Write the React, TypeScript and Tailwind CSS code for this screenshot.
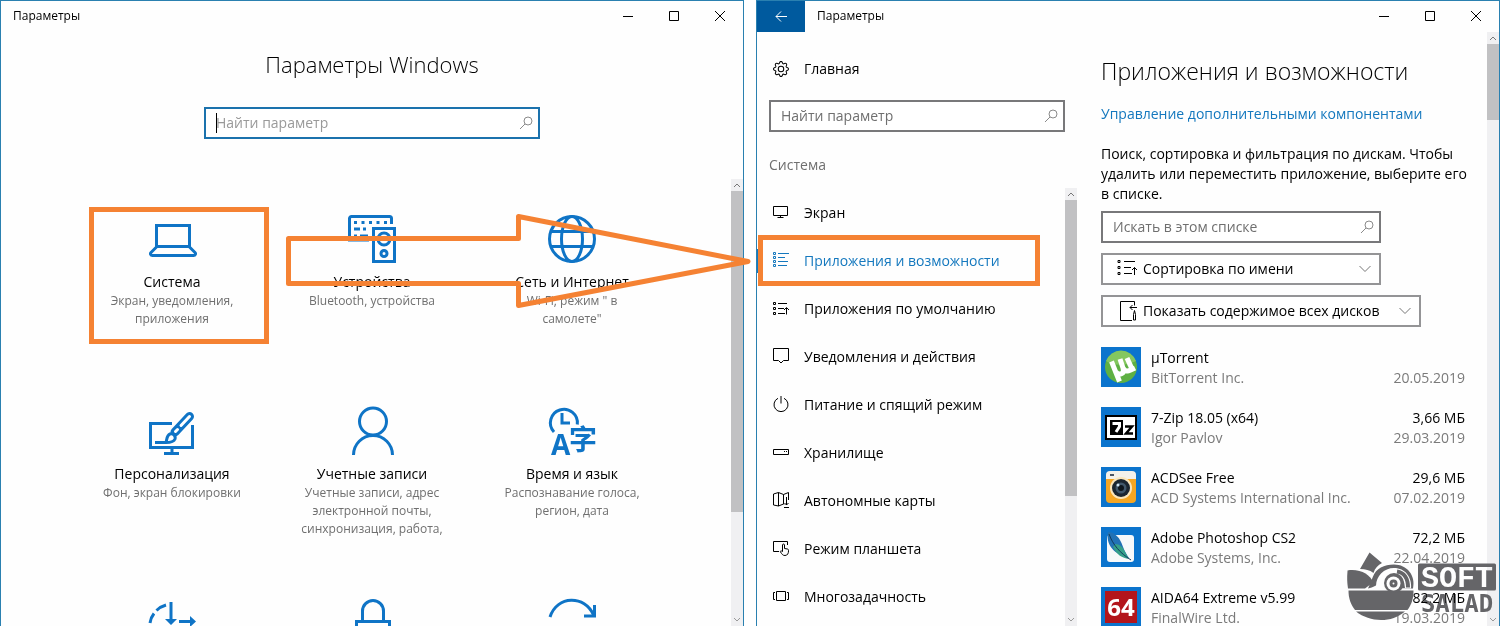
import type { ReactNode } from 'react'
import { BsGear } from 'react-icons/bs'

type IconProps = { children: ReactNode }

function TileIcon({ children }: IconProps) {
  return (
    <svg
      className="h-12 w-12 shrink-0 overflow-visible text-[#0f74c6]"
      viewBox="0 0 48 48"
      fill="none"
      stroke="currentColor"
      strokeWidth={3}
    >
      {children}
    </svg>
  )
}

function SmallIcon({ children }: IconProps) {
  return (
    <svg
      className="h-4 w-4 shrink-0 overflow-visible"
      viewBox="0 0 16 16"
      fill="none"
      stroke="currentColor"
    >
      {children}
    </svg>
  )
}

const LaptopIcon = () => (
  <TileIcon>
    <path d="M8.5 31.5v-21h33v21z" />
    <path d="m9 31.5-6 6c-1 1-.5 3 1.500 3h41c2 0 2.500-2 1.500-3l-6-6" />
  </TileIcon>
)

const DevicesIcon = () => (
  <TileIcon>
    <path d="M43.5 9V3.500a2 2 0 0 0-2-2h-38a2 2 0 0 0-2 2V25H21" />
    <path d="M6 7.500h3M13.500 7.500h3M21 7.500h3M28.500 7.500h3M36 7.500h3M6 14h6M15 14h3M6 21h3M12 21h8" />
    <path d="M25.500 13.500h21v33h-21z" />
    <circle cx="36" cy="24" r="6" />
    <circle cx="36" cy="38.500" r="3" />
  </TileIcon>
)

const GlobeIcon = () => (
  <TileIcon>
    <circle cx="24" cy="24" r="22.500" />
    <ellipse cx="24" cy="24" rx="10.500" ry="22.500" />
    <path d="M3.500 16.500h41M3.500 31.500h41" />
  </TileIcon>
)

const PersonalizationIcon = () => (
  <TileIcon>
    <path d="M24 16.500H2.500v24h42V18M24 41v5M16 46.500h15" />
    <path d="M42 9 29 23" stroke="white" strokeWidth={13} />
    <path d="M41.500 9.500 27 25" strokeWidth={9} strokeLinecap="round" />
    <path d="M41.500 9.500 33 18.500M29.500 22.500l-2 2" stroke="white" strokeWidth={3} strokeLinecap="round" />
    <path
      d="M7 35.500h11c1-3 .5-7 4-8.500 3-1 6 2 5 5-1.500 3.500-6 3.500-9 3.500z"
      fill="white"
      strokeWidth={3}
    />
  </TileIcon>
)

const AccountIcon = () => (
  <TileIcon>
    <circle cx="25" cy="14.500" r="13.500" />
    <path d="M5.500 48a19.500 19.500 0 0 1 39 0" />
  </TileIcon>
)

const TimeIcon = () => (
  <TileIcon>
    <path d="M6 25A13.500 13.500 0 1 1 29.300 17.500" />
    <path d="M14 6v10h8" />
    <g fill="currentColor" stroke="none">
      <text x="3" y="48" className="font-['Open_Sans'] text-[28px] font-bold">
        A
      </text>
      <text x="21" y="43" className="font-['Noto_Sans_CJK_SC'] text-[28px] font-bold">
        字
      </text>
    </g>
  </TileIcon>
)

const AccessIcon = () => (
  <TileIcon>
    <path d="M2 24c.5-4 2-7 4-9.500M8.500 11.500c3-3 6-4.500 9.500-5.500M23 3v18M31 22.500h13" />
    <path d="M17 20h12l-6 6zM42 17l6 5.500-6 5.500z" fill="currentColor" stroke="none" />
  </TileIcon>
)

const LockIcon = () => (
  <TileIcon>
    <path d="M14.500 22V12a10.500 10.500 0 0 1 21 0v10M8.500 48V22.500h33V48" />
  </TileIcon>
)

const UpdateIcon = () => (
  <TileIcon>
    <path d="M2 18C9-4 37-4 45.500 16" />
    <path d="M46.500 6v11H36" />
  </TileIcon>
)

const tiles = [
  { icon: <LaptopIcon />, title: 'Система', lines: ['Экран, уведомления,', 'приложения'] },
  { icon: <DevicesIcon />, title: 'Устройства', lines: ['Bluetooth, устройства'] },
  { icon: <GlobeIcon />, title: 'Сеть и Интернет', lines: ['Wi-Fi, режим " в', 'самолете"'] },
  { icon: <PersonalizationIcon />, title: 'Персонализация', lines: ['Фон, экран блокировки'] },
  {
    icon: <AccountIcon />,
    title: 'Учетные записи',
    lines: ['Учетные записи, адрес', 'электронной почты,', 'синхронизация, работа,'],
  },
  { icon: <TimeIcon />, title: 'Время и язык', lines: ['Распознавание голоса,', 'регион, дата'] },
  { icon: <AccessIcon />, title: '', lines: [] },
  { icon: <LockIcon />, title: '', lines: [] },
  { icon: <UpdateIcon />, title: '', lines: [] },
]

const SortIcon = () => (
  <SmallIcon>
    <path d="M.5 1.500h2v2h-2zM.5 6.500h2v2h-2zM.5 11.500h2v2h-2zM5 2.500h9M5 7.500h6M5 12.500h7M13.500 13.500V7M11 9l2.500-2.500L16 9" />
  </SmallIcon>
)

const nav = [
  {
    label: 'Экран',
    icon: (
      <SmallIcon>
        <path d="M.5 1.500h14v9H.5zM7.500 10.500v2M4.500 12.500h6" />
      </SmallIcon>
    ),
  },
  {
    label: 'Приложения и возможности',
    active: true,
    icon: (
      <SmallIcon>
        <path d="M.5-.5h2v2h-2zM.5 3.500h2v2h-2zM.5 7.500h2v2h-2zM.5 11.500h2v2h-2zM5 .5h11M5 4.500h7M5 8.500h10M5 12.500h9" />
      </SmallIcon>
    ),
  },
  { label: 'Приложения по умолчанию', icon: <SortIcon /> },
  {
    label: 'Уведомления и действия',
    icon: (
      <SmallIcon>
        <path d="M.5-.5h15v12h-5L8 14l-2.500-2.500h-5z" />
      </SmallIcon>
    ),
  },
  {
    label: 'Питание и спящий режим',
    icon: (
      <SmallIcon>
        <path d="M5 1.300a7 7 0 1 0 6 0M8-1v7.500" />
      </SmallIcon>
    ),
  },
  {
    label: 'Хранилище',
    icon: (
      <SmallIcon>
        <path d="M.5 4.500h15v5H.5zM11 6.500h1M13 6.500h1" />
      </SmallIcon>
    ),
  },
  {
    label: 'Автономные карты',
    icon: (
      <SmallIcon>
        <path d="M11 11.500 10.500 11l-5 2-5-1V1l5-1.500 5 2 5-2V7M5.500-.5V13M10.500 1.500V11M13.500 4v8M11.500 10l2 2 2-2M11 14.500h5" />
      </SmallIcon>
    ),
  },
  {
    label: 'Режим планшета',
    icon: (
      <SmallIcon>
        <path d="M6 10.500H.5v-10h14V4" />
        <path d="M9.500 10V4c0-1.300 2-1.300 2 0v3.500l3 .5c1 .2 1 1 1 2 0 2-.8 4.500-3.500 4.500-2.500 0-3-1.500-4.500-3.500-.5-1 .5-1.500 2-.5z" />
      </SmallIcon>
    ),
  },
  {
    label: 'Многозадачность',
    icon: (
      <SmallIcon>
        <path d="M3.500 2.500h9v9h-9zM2 3.500H.5v7H2M14 3.500h1.500v7H14" />
      </SmallIcon>
    ),
  },
]

const apps = [
  {
    name: 'µTorrent',
    vendor: 'BitTorrent Inc.',
    size: '',
    date: '20.05.2019',
    art: (
      <>
        <circle cx="20" cy="20" r="16" fill="#5fb043" />
        <path d="M5 14a16 16 0 0 1 30 0c-8 4-20 6-30 0z" fill="#84c75f" />
        <path
          d="m10.500 14.500 8 20M15 25c3 4 9 2 7-4l-3-9M22 21c2 5 6 3 12 0"
          fill="none"
          stroke="white"
          strokeWidth={5}
        />
        <path d="m26 11 5 11" stroke="white" strokeWidth={5} />
      </>
    ),
  },
  {
    name: '7-Zip 18.05 (x64)',
    vendor: 'Igor Pavlov',
    size: '3,66 МБ',
    date: '29.03.2019',
    art: (
      <>
        <path d="M4 8h32v25H4z" />
        <path d="M6 10h28v21H6z" fill="white" />
        <path d="M9 13h13v15H9z" />
        <path d="M11.500 16.500h7v3L15 25" fill="none" stroke="white" strokeWidth={3} />
        <path d="M24 19.500h7L25 26.500h7" fill="none" stroke="black" strokeWidth={2.5} />
      </>
    ),
  },
  {
    name: 'ACDSee Free',
    vendor: 'ACD Systems International Inc.',
    size: '29,6 МБ',
    date: '07.02.2019',
    art: (
      <>
        <rect x="5" y="5" width="30" height="31" rx="4" fill="#f5a623" />
        <path d="M5 12V8a4 4 0 0 1 4-4h22a4 4 0 0 1 4 4v4z" fill="#f4f1ea" />
        <path d="M9 7h4v2H9z" fill="#4b5563" />
        <circle cx="20" cy="21" r="11" fill="#fbe6bb" />
        <circle cx="20" cy="21" r="9" fill="#1b2530" />
        <circle cx="20" cy="21" r="5.500" fill="#41576b" />
        <circle cx="20" cy="21" r="3" fill="#0e151c" />
        <circle cx="17" cy="18" r="1.500" fill="#cfe3f2" />
      </>
    ),
  },
  {
    name: 'Adobe Photoshop CS2',
    vendor: 'Adobe Systems, Inc.',
    size: '72,2 МБ',
    date: '22.04.2019',
    art: (
      <>
        <rect x="6" y="8" width="27" height="27" rx="3" fill="#f7f9fa" />
        <path d="M7 5c6 0 11 5 13 10 2 4 3 9 8 16C18 29 4 21 7 5z" fill="#2272b5" />
        <path d="M14 17c4 0 8 3 9 6l5 9c-7-1-12-4-16-12z" fill="#35a08a" />
        <path d="M8 7c4 11 11 19 22 26" fill="none" stroke="#123a5c" />
      </>
    ),
  },
  {
    name: 'AIDA64 Extreme v5.99',
    vendor: 'FinalWire Ltd.',
    size: '82,2 МБ',
    date: '19.03.2019',
    art: (
      <>
        <path d="M4 4h32v32H4z" fill="#b3151b" />
        <text
          x="20"
          y="29"
          textAnchor="middle"
          fill="white"
          className="font-['Open_Sans'] text-[24px] font-bold"
        >
          64
        </text>
      </>
    ),
  },
]

function SearchGlyph() {
  return (
    <svg
      className="pointer-events-none absolute right-1.5 top-2 h-4 w-4 text-[#8a8a8a]"
      viewBox="0 0 16 16"
      fill="none"
      stroke="currentColor"
    >
      <circle cx="10" cy="6" r="4" />
      <path d="M7 9 2 14" />
    </svg>
  )
}

function CaptionButtons() {
  return (
    <div className="ml-auto flex h-[29px]">
      {['M0 5.500h10', 'M.5.5h9v9h-9z', 'm0 0 10 10M10 0 0 10'].map((d) => (
        <button key={d} className="flex w-[46px] items-center justify-center">
          <svg className="h-2.5 w-2.5 overflow-visible" viewBox="0 0 10 10" fill="none" stroke="black">
            <path d={d} />
          </svg>
        </button>
      ))}
    </div>
  )
}

function Scrollbar({ thumb }: { thumb: number }) {
  return (
    <div className="flex w-3 shrink-0 flex-col bg-[#f0f0f2]">
      <button className="flex h-3 items-center justify-center">
        <svg className="h-1.5 w-2" viewBox="0 0 8 6" fill="none" stroke="#777">
          <path d="m1 5 3-3 3 3" />
        </svg>
      </button>
      <div className="min-h-0 flex-1">
        <div className="bg-[#c1c1c3]" style={{ height: `${thumb}%` }} />
      </div>
      <button className="flex h-3 items-center justify-center">
        <svg className="h-1.5 w-2" viewBox="0 0 8 6" fill="none" stroke="#999">
          <path d="m1 1 3 3 3-3" />
        </svg>
      </button>
    </div>
  )
}

function SettingsHome() {
  return (
    <section className="flex min-w-0 flex-1 flex-col border border-b-0 border-[#2a80b0] bg-[#fefefe]">
      <header className="flex h-[31px] shrink-0">
        <span className="pl-3 text-xs/[29px]">Параметры</span>
        <CaptionButtons />
      </header>
      <h1 className="mt-4 text-center text-[22px]/8 font-light">Параметры Windows</h1>
      <div className="relative mx-auto mt-[27px] w-[336px] shrink-0">
        <input
          aria-label="Найти параметр"
          placeholder="Найти параметр"
          className="h-8 w-full border-2 border-[#1b72ad] bg-white px-2.5 pb-0.5 text-sm outline-none placeholder:text-[#999]"
        />
        <span className="absolute left-3 top-1.5 h-5 w-px bg-black" />
        <SearchGlyph />
      </div>
      <div className="mt-10 flex min-h-0 flex-1 pl-3">
        <div className="min-w-0 flex-1 overflow-hidden pt-9">
          <div className="mx-auto grid max-w-[600px] grid-cols-3">
            {tiles.map((tile, i) => (
              <button key={i} className="flex h-48 flex-col items-center">
                {tile.icon}
                <span className="mt-[9px] whitespace-nowrap text-sm/5">{tile.title}</span>
                <span className="whitespace-nowrap text-xs/[18px] text-[#6f6f6f]">
                  {tile.lines.map((line) => (
                    <span key={line} className="block">
                      {line}
                    </span>
                  ))}
                </span>
              </button>
            ))}
          </div>
        </div>
        <Scrollbar thumb={76} />
      </div>
    </section>
  )
}

function Sidebar() {
  return (
    <nav className="flex w-80 shrink-0 flex-col">
      <a href="#home" className="mt-3 flex h-12 shrink-0 items-center gap-[15px] pl-4 pt-0.5 text-sm">
        <BsGear className="h-4 w-4" />
        Главная
      </a>
      <div className="relative mx-3 mt-2 shrink-0">
        <input
          aria-label="Найти параметр"
          placeholder="Найти параметр"
          className="h-8 w-full border-2 border-[#78787a] bg-white px-2.5 pb-0.5 text-sm outline-none placeholder:text-[#6f6f6f]"
        />
        <SearchGlyph />
      </div>
      <h2 className="shrink-0 pb-[13px] pl-3 pt-[23px] text-sm/5 text-[#6f6f6f]">Система</h2>
      <div className="flex min-h-0 flex-1">
        <ul className="min-w-0 flex-1 overflow-hidden">
          {nav.map((item) => (
            <li key={item.label}>
              <a
                href="#section"
                className={
                  item.active
                    ? 'relative flex h-12 items-center gap-[15px] pl-4 pt-0.5 text-sm text-[#1478be] before:absolute before:left-0 before:h-6 before:w-1 before:bg-[#1478be]'
                    : 'flex h-12 items-center gap-[15px] pl-4 pt-0.5 text-sm'
                }
              >
                {item.icon}
                {item.label}
              </a>
            </li>
          ))}
        </ul>
        <Scrollbar thumb={71.5} />
      </div>
    </nav>
  )
}

function Picker({ label, icon, wide }: { label: string; icon: ReactNode; wide?: boolean }) {
  return (
    <div className={wide ? 'relative mt-2.5 w-80' : 'relative mt-2.5 w-[280px]'}>
      <select
        aria-label={label}
        className="block h-8 w-full appearance-none border-2 border-[#949496] bg-white pl-10 text-sm"
      >
        <option>{label}</option>
      </select>
      <span className="pointer-events-none absolute left-4 top-1.5">{icon}</span>
      <svg
        className="pointer-events-none absolute right-2.5 top-3 h-2 w-3"
        viewBox="0 0 12 8"
        fill="none"
        stroke="#777"
      >
        <path d="m.5 1 5.500 5.500L11.500 1" />
      </svg>
    </div>
  )
}

function AppsPage() {
  return (
    <div className="flex min-w-0 flex-1">
      <div className="min-w-0 flex-1 overflow-hidden pl-6 pr-[22px] pt-6 text-sm/5">
        <h1 className="text-[23px]/[30px] font-light">Приложения и возможности</h1>
        <a href="#features" className="mt-[18px] block whitespace-nowrap text-[#1478be]">
          Управление дополнительными компонентами
        </a>
        <p className="mt-5 whitespace-nowrap">
          Поиск, сортировка и фильтрация по дискам. Чтобы
          <br />
          удалить или переместить приложение, выберите его
          <br />в списке.
        </p>
        <div className="relative mt-[7px] w-[280px]">
          <input
            aria-label="Искать в этом списке"
            placeholder="Искать в этом списке"
            className="block h-8 w-full border-2 border-[#78787a] bg-white px-2.5 pb-0.5 outline-none placeholder:text-[#6f6f6f]"
          />
          <SearchGlyph />
        </div>
        <Picker
          label="Сортировка по имени"
          icon={
            <svg className="h-5 w-5" viewBox="0 0 20 20" fill="none" stroke="black">
              <path d="M1 1.500h2v2H1zM1 7.500h2v2H1zM1 13.500h2v2H1zM7 2.500h11M7 8.500h7M7 14.500h8M17.500 16V8.500M15 11l2.500-2.500L20 11" />
            </svg>
          }
        />
        <Picker
          wide
          label="Показать содержимое всех дисков"
          icon={
            <svg className="h-5 w-5" viewBox="0 0 20 20" fill="none" stroke="black">
              <path d="M15 19.500H3.500V.5h14v4M20 6.500h-7M15.500 4 13 6.500 15.500 9M16.500 19V13.500l1-4 1 4V19z" />
            </svg>
          }
        />
        <ul className="mt-2.5">
          {apps.map((app) => (
            <li key={app.name} className="flex h-[60px] items-center">
              <svg className="h-10 w-10 shrink-0 bg-[#0b74cd]" viewBox="0 0 40 40">
                {app.art}
              </svg>
              <div className="ml-2.5 whitespace-nowrap pt-0.5">
                <div>{app.name}</div>
                <div className="text-[#7a7a7a]">{app.vendor}</div>
              </div>
              <div className="ml-auto pt-0.5 text-right">
                <div className="h-5">{app.size}</div>
                <div className="text-[#7a7a7a]">{app.date}</div>
              </div>
            </li>
          ))}
        </ul>
      </div>
      <Scrollbar thumb={13.3} />
    </div>
  )
}

function SettingsSystem() {
  return (
    <section className="flex min-w-0 flex-1 flex-col border border-b-0 border-[#2a80b0] bg-[#fefefe]">
      <header className="flex h-[31px] shrink-0">
        <button className="flex w-12 items-center justify-center bg-[#005a9e]">
          <svg className="h-3 w-3" viewBox="0 0 12 12" fill="none" stroke="white">
            <path d="M12 5.500H1M6 .5l-5 5 5 5" />
          </svg>
        </button>
        <span className="pl-3 text-xs/[29px]">Параметры</span>
        <CaptionButtons />
      </header>
      <div className="flex min-h-0 flex-1">
        <Sidebar />
        <AppsPage />
      </div>
    </section>
  )
}

// Orange boxes and arrow that walk from the tile to the menu item
function Markup() {
  return (
    <svg
      className="pointer-events-none absolute left-0 top-0 h-[360px] w-[1060px]"
      viewBox="0 0 1060 360"
      fill="none"
      stroke="#f58233"
      strokeWidth={5}
    >
      <path d="M91.500 209.500h175v132h-175z" />
      <path
        d="M288.500 238.500h230V216.500L748 261.500 518.500 305.500V283.500h-230z"
        strokeLinejoin="round"
      />
      <path d="M760.500 237.500h277v46h-277z" />
    </svg>
  )
}

function Watermark() {
  return (
    <svg
      className="pointer-events-none absolute bottom-1.5 right-1 h-[68px] w-[151px] mix-blend-darken"
      viewBox="0 0 151 68"
      fill="#656568"
    >
      <path d="M14 17 23.500.5 36 11c-4 2-7 5-8.500 10-4-3-8-4-13.500-4z" />
      <path d="M1.500 18.500c12-2 23 4 25.500 12l-8 6H2c-1-6-1-12-.5-18z" />
      <path d="M2.500 38.500h65c0 8-2 14-6 19.500H9c-4-5-6.500-11-6.500-19.500z" />
      <path d="M10 59.500h49c-7 6-15 8.500-24 8.500s-18-3-25-8.500z" />
      <path d="M22 36.500c6-1 10-5 14-4l4 4h27c3-13-6-24-19-24-10 0-18 4-21 12z" />
      <path
        d="M30 34c0-10 8-18 18-18 11 0 18 9 17 20.500H31z"
        fill="white"
      />
      <circle cx="48" cy="31" r="10" />
      <path d="M51 19.500c7 1 11 7 11 16M50 25c4 1 7 5 7 11" fill="none" stroke="#656568" strokeWidth={4} />
      <circle cx="47.500" cy="31.500" r="7" fill="white" />
      <circle cx="47.500" cy="31.500" r="4" />
      <circle cx="47.500" cy="31.500" r="1" fill="white" />
      <rect x="72" y="11.500" width="78" height="27" rx="1.500" />
      <text
        x="111"
        y="35"
        textAnchor="middle"
        fill="white"
        className="font-['Liberation_Mono'] text-[30px] font-bold"
      >
        SOFT
      </text>
      <text
        x="111"
        y="60"
        textAnchor="middle"
        className="font-['DejaVu_Sans_Mono'] text-[24px] font-bold"
      >
        SALAD
      </text>
    </svg>
  )
}

export default function App() {
  return (
    <main className="relative flex h-screen gap-3 overflow-hidden bg-white pr-px font-['Open_Sans','Noto_Sans',sans-serif] text-black">
      <SettingsHome />
      <SettingsSystem />
      <Markup />
      <Watermark />
    </main>
  )
}
